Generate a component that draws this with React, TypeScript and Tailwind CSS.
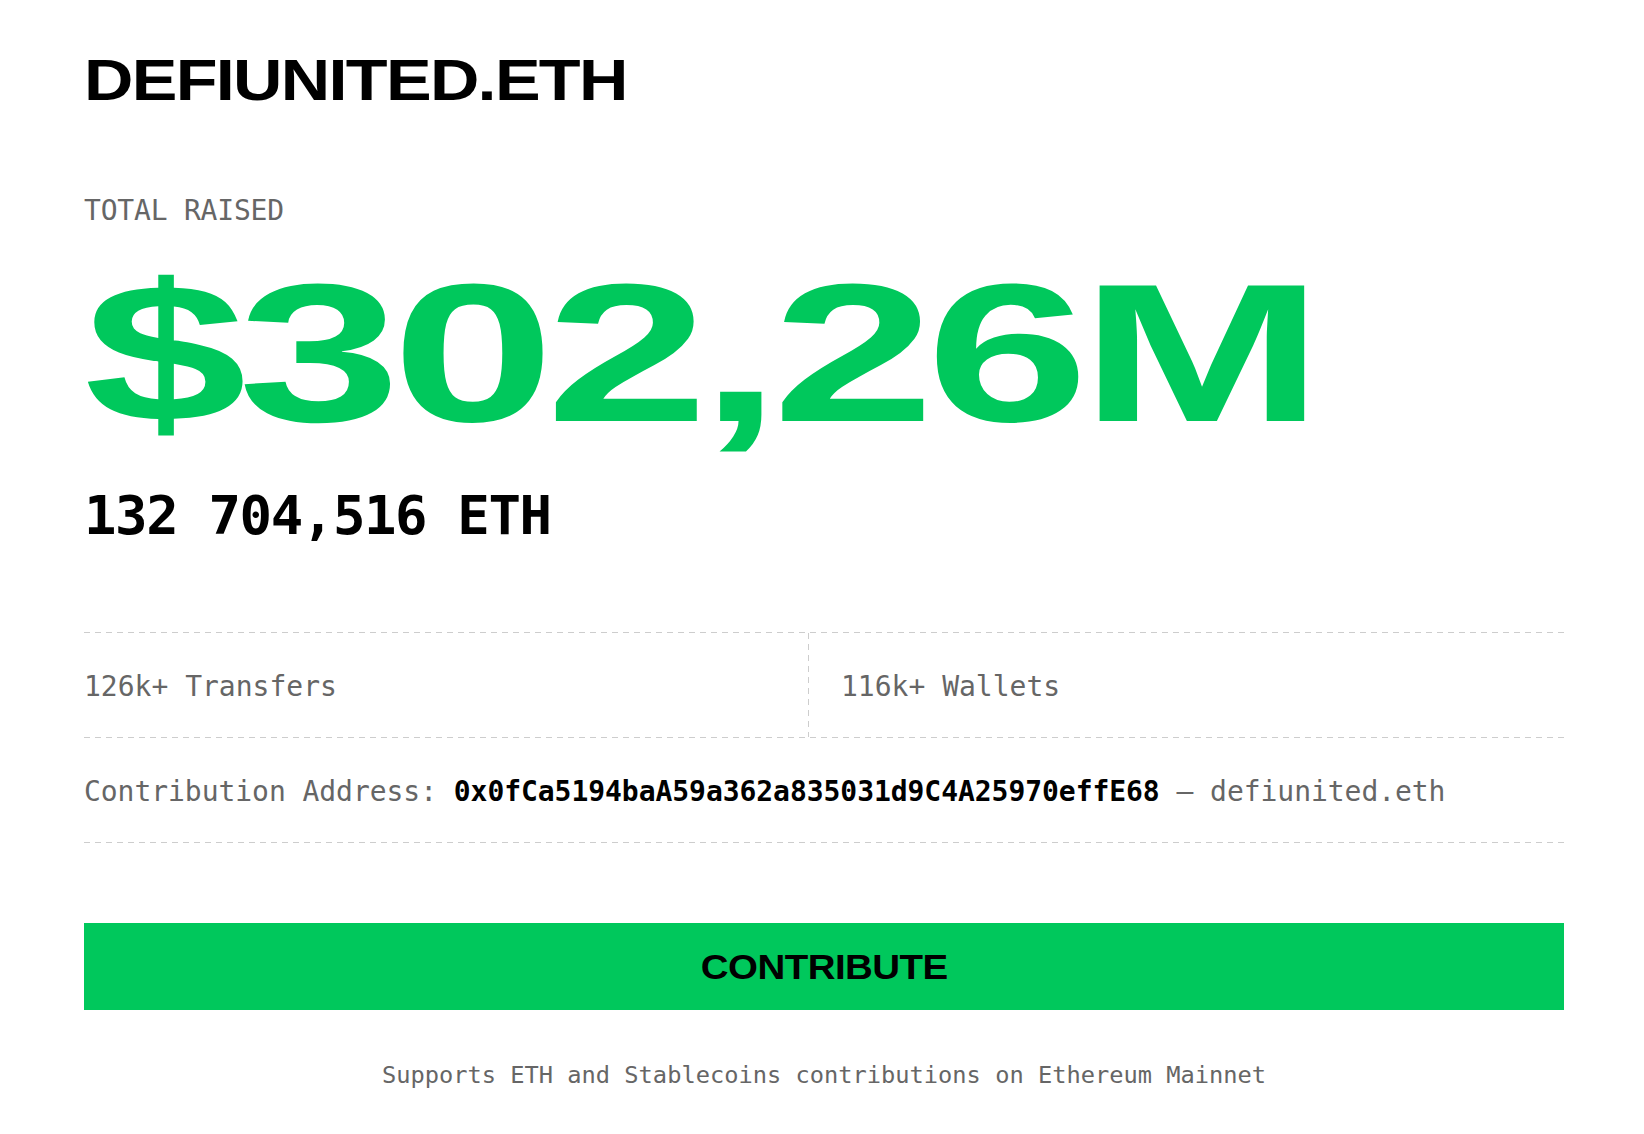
import React from 'react';

const mono = "font-['DejaVu_Sans_Mono','Liberation_Mono',monospace]";
const wide = "font-['Liberation_Sans',Arial,sans-serif] font-bold";

const DashH: React.FC = () => (
  <div className="h-px w-full bg-[repeating-linear-gradient(to_right,#cdcdcd_0px,#cdcdcd_6px,transparent_6px,transparent_11px)]" />
);

export default function App() {
  return (
    <div className="min-h-screen overflow-hidden bg-white">
      <div className="ml-[84px] w-[1480px] pt-[52px] pb-10">
        <h1 className={`${wide} w-max text-[57px] leading-none tracking-[-1.4px] text-black origin-left scale-x-[1.2]`}>
          DEFIUNITED.ETH
        </h1>

        <div className={`${mono} mt-[88px] text-[28px] leading-none tracking-[-0.2px] text-[#666666]`}>TOTAL RAISED</div>

        <div
          className={`${wide} mt-[30px] w-max text-[197px] leading-none tracking-[-0.03em] text-[#00c85c] origin-left scale-x-[1.485] whitespace-nowrap`}
        >
          $302,26M
        </div>

        <div className={`${mono} mt-[37px] text-[54px] font-bold leading-none tracking-[-1.4px] text-black`}>
          132 704,516 ETH
        </div>

        <div className="mt-[89px]">
          <DashH />
          <div className="flex h-[104px]">
            <div className={`${mono} flex w-[724px] items-center pt-[4px] text-[28px] text-[#666666]`}>126k+ Transfers</div>
            <div className="w-px self-stretch bg-[repeating-linear-gradient(to_bottom,#cdcdcd_0px,#cdcdcd_6px,transparent_6px,transparent_11px)]" />
            <div className={`${mono} flex flex-1 items-center pl-[32px] pt-[4px] text-[28px] text-[#666666]`}>116k+ Wallets</div>
          </div>
          <DashH />
          <div
            className={`${mono} flex h-[104px] items-center whitespace-nowrap pt-[4px] text-[28px] tracking-[-0.05px] text-[#666666]`}
          >
            <span>Contribution Address:&nbsp;</span>
            <span className="font-bold text-black">0x0fCa5194baA59a362a835031d9C4A25970effE68</span>
            <span>&nbsp;— defiunited.eth</span>
          </div>
          <DashH />
        </div>

        <button className="mt-[80px] flex h-[87px] w-full items-center justify-center bg-[#00c85c]">
          <span className={`${wide} text-[35px] leading-none tracking-[-0.5px] text-black scale-x-[1.1]`}>CONTRIBUTE</span>
        </button>

        <p className={`${mono} mt-[54px] text-center text-[23.7px] leading-none text-[#666666]`}>
          Supports ETH and Stablecoins contributions on Ethereum Mainnet
        </p>
      </div>
    </div>
  );
}
